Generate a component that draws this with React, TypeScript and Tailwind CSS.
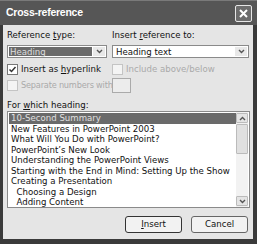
import React from "react";

const font = { fontFamily: "'DejaVu Sans', 'Liberation Sans', sans-serif" };
const titleFont = { fontFamily: "'Liberation Sans', Arial, sans-serif" };

function Chevron({ up = false }: { up?: boolean }) {
  return (
    <svg width="7" height="5" viewBox="0 0 7 5" className={up ? "rotate-180" : ""}>
      <path d="M1 1 L3.5 3.5 L6 1" stroke="#555" strokeWidth="1.4" fill="none" />
    </svg>
  );
}

function Check() {
  return (
    <svg width="9" height="9" viewBox="0 0 9 9">
      <path d="M1.5 4.5 L3.5 6.5 L7.5 2" stroke="#333" strokeWidth="1.5" fill="none" />
    </svg>
  );
}

const items = [
  "10-Second Summary",
  "New Features in PowerPoint 2003",
  "What Will You Do with PowerPoint?",
  "PowerPoint\u2019s New Look",
  "Understanding the PowerPoint Views",
  "Starting with the End in Mind: Setting Up the Show",
  "Creating a Presentation",
  "\u00a0\u00a0Choosing a Design",
  "\u00a0\u00a0Adding Content",
];

export default function App() {
  return (
    <div
      className="w-[257px] h-[244px] bg-[#3a3a3a] pl-[3px] pr-[4px] pb-[5px] flex flex-col text-[8.6px] text-[#111]"
      style={font}
    >
      <div className="h-[25px] shrink-0 flex items-center justify-between bg-[#565656] -ml-[3px] -mr-[4px] pl-[6px] pr-[5px] border-t border-[#7a7a7a]">
        <span className="text-white font-bold text-[10.5px] tracking-[-0.25px]" style={titleFont}>
          Cross-reference
        </span>
        <div className="w-[17px] h-[17px] rounded-[2px] border border-[#e6e6e6] bg-[#6c6c6c] flex items-center justify-center">
          <svg width="9" height="9" viewBox="0 0 9 9">
            <path d="M1 1 L8 8 M8 1 L1 8" stroke="white" strokeWidth="2" />
          </svg>
        </div>
      </div>
      <div className="flex-1 bg-[#e5e5e5] px-[4px] flex flex-col">
        <div className="flex gap-[5px] mt-[4px]">
          <div className="flex flex-col w-[100px]">
            <span className="h-[13px] leading-[13px] whitespace-nowrap">
              Reference <u>t</u>ype:
            </span>
            <div className="mt-[3px] h-[13px] border border-[#8a8a8a] bg-white flex items-stretch p-[1px]">
              <div className="flex-1 bg-[#6a6a6a] text-[#ddd] leading-[10px] pl-[1px]">Heading</div>
              <div className="w-[12px] bg-[#e8e8e8] flex items-center justify-center ml-[1px]">
                <Chevron />
              </div>
            </div>
          </div>
          <div className="flex flex-col w-[137px]">
            <span className="h-[13px] leading-[13px] whitespace-nowrap">
              Insert <u>r</u>eference to:
            </span>
            <div className="mt-[3px] h-[13px] border border-[#8a8a8a] bg-white flex items-stretch p-[1px]">
              <div className="flex-1 leading-[10px] pl-[2px]">Heading text</div>
              <div className="w-[12px] bg-[#e8e8e8] flex items-center justify-center">
                <Chevron />
              </div>
            </div>
          </div>
        </div>
        <div className="flex mt-[6px] h-[11px] items-center">
          <div className="w-[105px] flex items-center gap-[3px] whitespace-nowrap">
            <div className="w-[11px] h-[11px] shrink-0 border border-[#777] bg-white flex items-center justify-center">
              <Check />
            </div>
            <span>
              Insert as <u>h</u>yperlink
            </span>
          </div>
          <div className="flex items-center gap-[3px] text-[#aaa] whitespace-nowrap">
            <div className="w-[11px] h-[11px] shrink-0 border border-[#c4c4c4] bg-[#f4f4f4]" />
            <span>Include above/below</span>
          </div>
        </div>
        <div className="flex mt-[3px] h-[15px] items-center">
          <div className="w-[105px] flex items-center gap-[3px] text-[#aaa] whitespace-nowrap">
            <div className="w-[11px] h-[11px] shrink-0 border border-[#c4c4c4] bg-[#f4f4f4]" />
            <span className="text-[8.2px] tracking-[-0.2px]">Separate numbers with</span>
          </div>
          <div className="w-[19px] h-[15px] border border-[#aaa] bg-[#ececec]" />
        </div>
        <span className="mt-[7px] h-[11px] leading-[11px] whitespace-nowrap">
          For <u>w</u>hich heading:
        </span>
        <div className="w-[243px] h-[97px] border border-[#8a8a8a] bg-white flex">
          <div className="flex-1 flex flex-col pt-[1px] pl-[1px] overflow-hidden">
            {items.map((t, i) => (
              <div
                key={i}
                className={
                  "h-[10.5px] leading-[10.5px] shrink-0 pl-[2px] whitespace-pre " +
                  (i === 0 ? "bg-[#6a6a6a] text-[#e0e0e0]" : "")
                }
              >
                {t}
              </div>
            ))}
          </div>
          <div className="w-[12px] flex flex-col bg-[#f2f2f2] py-[1px] mr-[1px]">
            <div className="h-[10px] border border-[#bbb] rounded-[1px] bg-[#e4e4e4] flex items-center justify-center">
              <Chevron up />
            </div>
            <div className="h-[30px] mt-[1px] border border-[#bbb] rounded-[1px] bg-[#e0e0e0]" />
            <div className="flex-1" />
            <div className="h-[10px] border border-[#bbb] rounded-[1px] bg-[#e4e4e4] flex items-center justify-center">
              <Chevron />
            </div>
          </div>
        </div>
        <div className="flex justify-end gap-[9px] mt-[8px] pr-[1px]">
          <button className="w-[57px] h-[17px] border border-[#333] rounded-[3px] bg-[#f2f2f2] text-[8.6px]">
            <u>I</u>nsert
          </button>
          <button className="w-[57px] h-[17px] border border-[#666] rounded-[3px] bg-[#f2f2f2] text-[8.6px]">
            Cancel
          </button>
        </div>
      </div>
    </div>
  );
}
